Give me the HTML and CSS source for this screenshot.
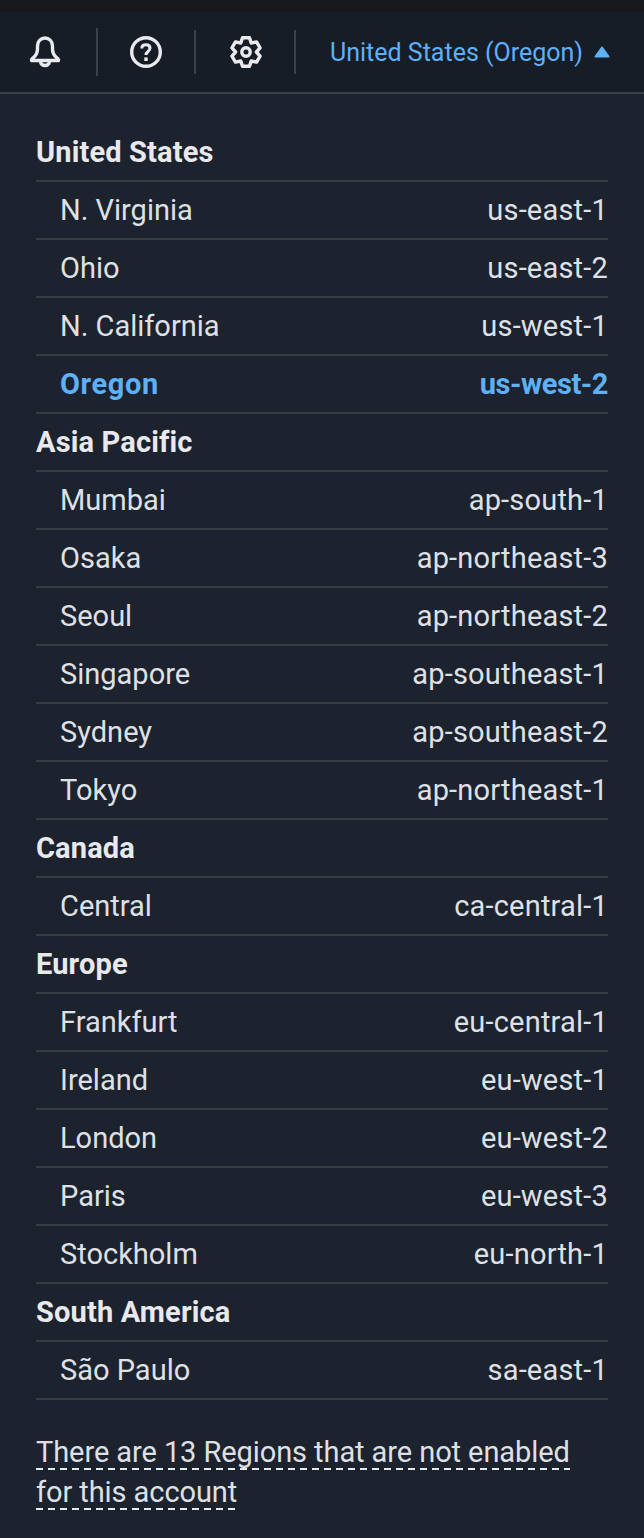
FILE: index.html
```html
<!DOCTYPE html>
<html>
    <head>
        <title>Region selector</title>
        <link rel="stylesheet" href="styles.css">
    </head>
    <body>
        <div class="topstrip"></div>
        <header class="nav">
            <div class="nav-icon bell">
                <svg width="32" height="32" viewBox="0 0 32 32" fill="none" stroke="#eaeaee" stroke-width="3.4" stroke-linejoin="round" stroke-linecap="round">
                    <path d="M2.5 24.5 C2 23.5 3 23 4 22 C7 19.5 8.5 17 8.5 13 L8.5 10 C8.5 5 12 2 16 2 C20 2 23.5 5 23.5 10 L23.5 13 C23.5 17 25 19.5 28 22 C29 23 30 23.5 29.5 24.5 Z"/>
                    <path d="M11.5 25 C11.5 31 20.5 31 20.5 25"/>
                </svg>
            </div>
            <div class="nav-icon help">
                <svg width="32" height="32" viewBox="0 0 32 32" fill="none" stroke="#eaeaee" stroke-width="3.4">
                    <circle cx="16" cy="16" r="14.3"/>
                    <path d="M11.8 12.5 C11.8 10 13.5 8.7 16 8.7 C18.5 8.7 20 10.2 20 12.3 C20 15.5 16 15.5 16 19" stroke-width="3"/>
                    <path d="M16 21.4 L16 25"/>
                </svg>
            </div>
            <div class="nav-icon gear">
                <svg width="32" height="32" viewBox="0 0 32 32" fill="none" stroke="#eaeaee" stroke-width="3.4" stroke-linejoin="round">
                    <circle cx="16" cy="16" r="4.2"/>
                    <path d="M12.5 1.8 L19.5 1.8 L21.2 7 L26.55 5.87 L30.05 11.93 L26.4 16 L30.05 20.07 L26.55 26.13 L21.2 25 L19.5 30.2 L12.5 30.2 L10.8 25 L5.45 26.13 L1.95 20.07 L5.6 16 L1.95 11.93 L5.45 5.87 L10.8 7 Z"/>
                </svg>
            </div>
            <div class="nav-region">
                <span class="region-label">United States (Oregon)</span>
                <svg class="caret" width="16" height="12" viewBox="0 0 16 12">
                    <path d="M8 1.5 L14.5 10.5 L1.5 10.5 Z" fill="#5fb0f5" stroke="#5fb0f5" stroke-width="2" stroke-linejoin="round"/>
                </svg>
            </div>
        </header>

        <main class="regions">
            <div class="group">United States</div>
            <div class="row"><span>N. Virginia</span><span class="code">us-east-1</span></div>
            <div class="row"><span>Ohio</span><span class="code">us-east-2</span></div>
            <div class="row"><span>N. California</span><span class="code">us-west-1</span></div>
            <div class="row selected"><span>Oregon</span><span class="code">us-west-2</span></div>

            <div class="group">Asia Pacific</div>
            <div class="row"><span>Mumbai</span><span class="code">ap-south-1</span></div>
            <div class="row"><span>Osaka</span><span class="code">ap-northeast-3</span></div>
            <div class="row"><span>Seoul</span><span class="code">ap-northeast-2</span></div>
            <div class="row"><span>Singapore</span><span class="code">ap-southeast-1</span></div>
            <div class="row"><span>Sydney</span><span class="code">ap-southeast-2</span></div>
            <div class="row"><span>Tokyo</span><span class="code">ap-northeast-1</span></div>

            <div class="group">Canada</div>
            <div class="row"><span>Central</span><span class="code">ca-central-1</span></div>

            <div class="group">Europe</div>
            <div class="row"><span>Frankfurt</span><span class="code">eu-central-1</span></div>
            <div class="row"><span>Ireland</span><span class="code">eu-west-1</span></div>
            <div class="row"><span>London</span><span class="code">eu-west-2</span></div>
            <div class="row"><span>Paris</span><span class="code">eu-west-3</span></div>
            <div class="row"><span>Stockholm</span><span class="code">eu-north-1</span></div>

            <div class="group">South America</div>
            <div class="row"><span>São Paulo</span><span class="code">sa-east-1</span></div>

            <p class="note"><span>There are 13 Regions that are not enabled for this account</span></p>
        </main>
    </body>
</html>
```

FILE: styles.css
```css
body {
    margin: 0;
    background: #1c232e;
    color: #dfe0e5;
    font-family: Roboto, sans-serif;
    font-size: 29px;
    line-height: 40px;
}

.topstrip {
    height: 12px;
    background: #16181c;
}

.nav {
    display: flex;
    align-items: center;
    height: 80px;
    background: #161d26;
    border-bottom: 2px solid #3c4049;
}

.nav-icon {
    display: flex;
    align-items: center;
    justify-content: center;
    height: 44px;
    border-right: 2px solid #3c4049;
}

.nav-icon svg {
    display: block;
}

.bell {
    width: 90px;
    height: 48px;
    padding-right: 6px;
}

.help {
    width: 96px;
}

.gear {
    width: 96px;
    padding-left: 2px;
}

.nav-region {
    display: flex;
    align-items: center;
    gap: 11px;
    margin-left: 34px;
    color: #5fb0f5;
    font-size: 25px;
}

.region-label {
    padding-top: 2px;
}

.regions {
    padding: 30px 36px 0;
}

.group,
.row {
    height: 56px;
    line-height: 56px;
    border-bottom: 2px solid #363b44;
}

.group {
    color: #e9e9ed;
    font-weight: 700;
    letter-spacing: 0.15px;
}

.row {
    display: flex;
    justify-content: space-between;
    padding-left: 24px;
}

.code {
    letter-spacing: 0.2px;
}

.selected {
    color: #5fb0f5;
    font-weight: 700;
    letter-spacing: 0.6px;
}

.selected .code {
    letter-spacing: -0.45px;
}

.note {
    margin: 32px 0 0;
    padding-right: 30px;
    letter-spacing: -0.08px;
}

.note span {
    padding-bottom: 1px;
    background: linear-gradient(to right, #e9e9ed 7px, transparent 7px) left bottom / 12px 2px repeat-x;
    -webkit-box-decoration-break: clone;
    box-decoration-break: clone;
}
```
